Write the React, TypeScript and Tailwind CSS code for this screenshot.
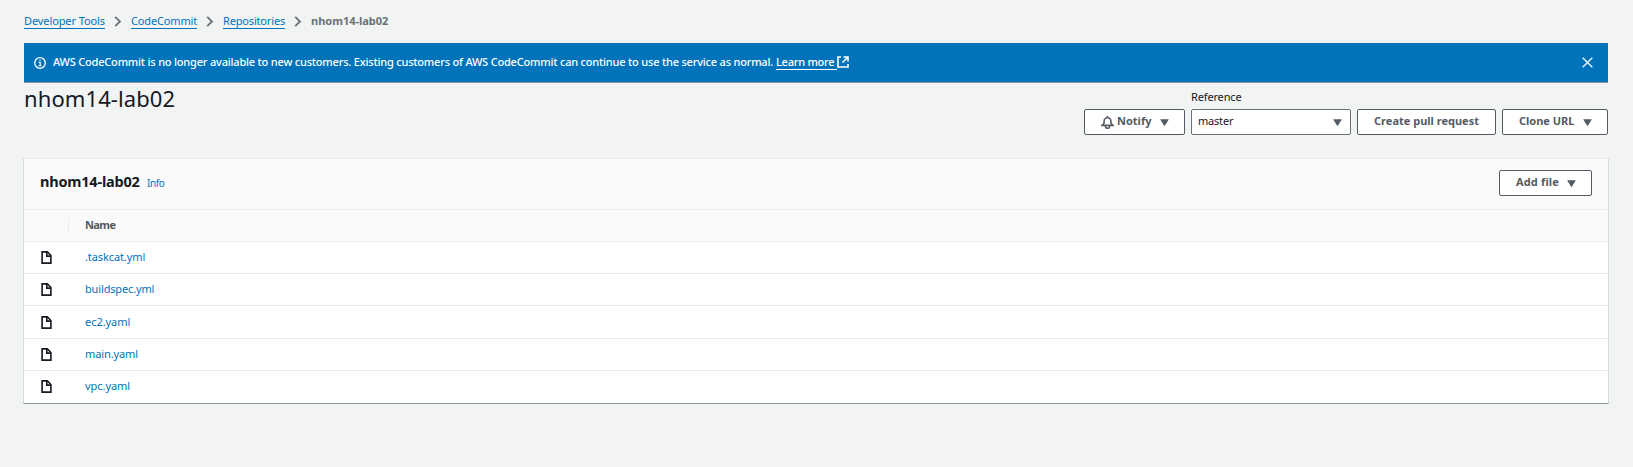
import type { ReactNode } from 'react';

const files = [
  { name: '.taskcat.yml', row: 'h-8', tracking: 'tracking-[-0.1px]' },
  { name: 'buildspec.yml', row: 'h-8', tracking: 'tracking-[-0.15px]' },
  { name: 'ec2.yaml', row: 'h-[33px]', tracking: 'tracking-[-0.05px]' },
  { name: 'main.yaml', row: 'h-8', tracking: 'tracking-[-0.1px]' },
  { name: 'vpc.yaml', row: 'h-8', tracking: 'tracking-[-0.05px]' },
];

function Chevron() {
  return (
    <svg className="mx-[9px] h-[11px] w-2 shrink-0" viewBox="0 0 8 11" fill="none" stroke="#687078" strokeWidth="1.8">
      <path d="M1.2 .8 6 5.5 1.2 10.2" />
    </svg>
  );
}

function Caret() {
  return (
    <svg className="mt-px h-[7px] w-[9px] shrink-0" viewBox="0 0 9 7" fill="#545b64">
      <path d="M.6 .3h7.8q.5 0 .2.5L5 6.5q-.5.6-1 0L.4.8Q.1.3.6.3Z" />
    </svg>
  );
}

function FileIcon() {
  return (
    <svg className="h-[13px] w-[11px]" viewBox="0 0 11 13" fill="none" stroke="#16191f" strokeWidth="1.6">
      <path d="M1.1 .9h5.2L9.9 4.5v7.6H1.1Z" />
      <path d="M5.8 1v4.1H10" />
    </svg>
  );
}

function Button({ className, children }: { className: string; children: ReactNode }) {
  return (
    <button
      className={`flex h-[26px] items-center rounded-[2px] border border-[#545b64] bg-white text-[11px] font-bold leading-none text-[#545b64] ${className}`}
    >
      {children}
    </button>
  );
}

function Crumb({ className, children }: { className: string; children: ReactNode }) {
  return (
    <a href="#" className={`h-[15px] whitespace-nowrap border-b border-[#0073bb] leading-[14px] text-[#0073bb] ${className}`}>
      {children}
    </a>
  );
}

export default function App() {
  return (
    <div className="h-[467px] w-[1633px] overflow-hidden bg-[#f2f3f3] px-6 pt-3.5 font-['Noto_Sans',sans-serif] text-[11px] text-[#16191f]">
      <nav className="flex h-[15px] items-center">
        <Crumb className="w-[81px] tracking-[-0.1px]">Developer Tools</Crumb>
        <Chevron />
        <Crumb className="w-[66px] tracking-[-0.15px]">CodeCommit</Crumb>
        <Chevron />
        <Crumb className="w-[62px] tracking-[-0.17px]">Repositories</Crumb>
        <Chevron />
        <span className="pb-px font-bold leading-[14px] text-[#687078]">nhom14-lab02</span>
      </nav>

      <section className="mt-3.5 flex h-10 w-[1584px] items-center border-b border-[#879596] bg-[#0073bb] pl-2.5 pr-[15px] text-white">
        <svg className="size-3 shrink-0" viewBox="0 0 12 12" fill="none" stroke="#fff" strokeWidth="1.3">
          <circle cx="6" cy="6" r="5.3" />
          <path d="M4.7 5.4h1.5V9M4.5 8.8h3M5.3 3.3h1.3" strokeWidth="1.1" />
        </svg>
        <p className="ml-[7px] w-[723px] whitespace-nowrap pb-0.5 font-medium leading-[14px] tracking-[-0.193px]">
          AWS CodeCommit is no longer available to new customers. Existing customers of AWS CodeCommit can continue to use the service as normal.
        </p>
        <a href="#" className="flex items-center pb-px">
          <span className="h-[15px] w-[61px] whitespace-nowrap border-b border-white font-medium leading-[14px] tracking-[-0.25px]">
            Learn more
          </span>
          <svg className="size-3" viewBox="0 0 12 12" fill="none" stroke="#fff" strokeWidth="1.6">
            <path d="M4 1H1v10h10V8M6.5 1H11v4.5M11 1 5.5 6.5" />
          </svg>
        </a>
        <svg className="ml-auto size-[11px]" viewBox="0 0 11 11" fill="none" stroke="#e6f0f7" strokeWidth="1.5">
          <path d="m.7.7 9.6 9.6M10.3.7.7 10.3" />
        </svg>
      </section>

      <header className="flex h-[75px] w-[1584px] justify-between">
        <h1 className="pt-px text-[22px] leading-7 tracking-[0.1px]">nhom14-lab02</h1>
        <div className="flex items-end gap-1.5 pb-[23px]">
          <Button className="w-[101px] pl-4">
            <svg className="size-[13px]" viewBox="0 0 13 13" fill="none" stroke="#545b64" strokeWidth="1.6">
              <path d="M1 9.4h11L9.9 7.2V5.2a3.4 3.4 0 0 0-6.8 0v2ZM6.5 0v1.6M4.4 10.2a2.1 2.1 0 0 0 4.2 0" />
            </svg>
            <span className="ml-[3px] w-[43px] pb-[3px] text-left">Notify</span>
            <Caret />
          </Button>
          <div className="w-40">
            <div className="h-[19px] leading-[14px] tracking-[-0.15px]">Reference</div>
            <div className="flex h-[26px] items-center justify-between rounded-[2px] border border-[#687078] bg-white pl-1.5 pr-2 leading-none">
              <span className="pb-[3px] tracking-[-0.2px]">master</span>
              <Caret />
            </div>
          </div>
          <Button className="w-[139px] justify-center">
            <span className="pb-[3px]">Create pull request</span>
          </Button>
          <Button className="w-[106px] pl-4">
            <span className="w-[64px] pb-[3px] text-left">Clone URL</span>
            <Caret />
          </Button>
        </div>
      </header>

      <main className="-ml-px h-[246px] w-[1586px] border border-b-[#879596] border-l-[#d5dbdb] border-r-[#d5dbdb] border-t-[#eaeded] bg-white">
        <div className="flex h-[51px] justify-between border-b border-[#eaeded] bg-[#fafafa] pl-4 pr-4 pt-[11px]">
          <div className="flex items-baseline pt-px">
            <h2 className="w-[107px] text-[14.5px] font-bold leading-5 tracking-[-0.2px]">nhom14-lab02</h2>
            <a href="#" className="text-[10px] leading-4 tracking-[-0.45px] text-[#0073bb]">Info</a>
          </div>
          <Button className="w-[93px] pl-4">
            <span className="w-[51px] pb-[3px] text-left tracking-[0.15px]">Add file</span>
            <Caret />
          </Button>
        </div>
        <div className="flex h-8 items-center border-b border-[#eaeded] bg-[#fafafa]">
          <div className="h-4 w-[45px] border-r border-[#eaeded]" />
          <div className="pl-4 font-bold tracking-[-0.6px] text-[#545b64]">Name</div>
        </div>
        {files.map((file) => (
          <div
            key={file.name}
            className={`flex items-center border-b border-[#eaeded] last:border-b-0 last:pb-px ${file.row}`}
          >
            <div className="w-[61px] pl-[17px]">
              <FileIcon />
            </div>
            <a href="#" className={`pb-px leading-[14px] text-[#0073bb] ${file.tracking}`}>
              {file.name}
            </a>
          </div>
        ))}
      </main>
    </div>
  );
}
